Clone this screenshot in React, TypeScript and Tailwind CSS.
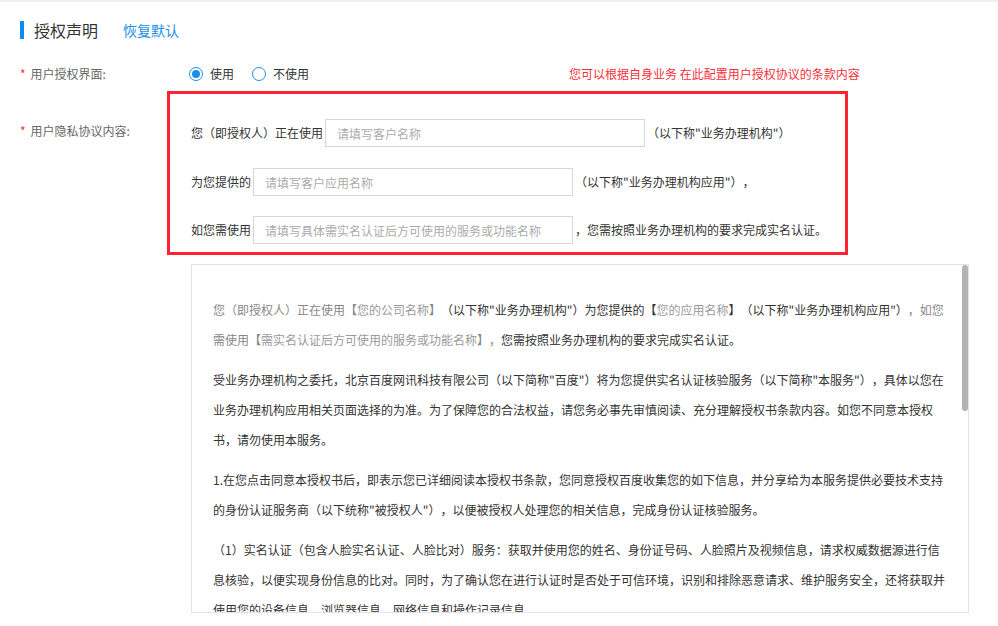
import React from "react";

const FONT = { fontFamily: '"Noto Sans CJK SC", "Noto Sans", sans-serif' };

function Radio({ checked, label }: { checked: boolean; label: string }) {
  return (
    <label className="flex items-center">
      <span className="flex h-[14px] w-[14px] items-center justify-center rounded-full border border-[#1a8fe6] bg-white">
        {checked && <span className="h-[8px] w-[8px] rounded-full bg-[#1a8fe6]" />}
      </span>
      <span className="ml-[7px] text-[12px] leading-[20px] text-[#333]">{label}</span>
    </label>
  );
}

function Field({ placeholder }: { placeholder: string }) {
  return (
    <input
      readOnly
      placeholder={placeholder}
      className="mx-[2px] h-[28px] w-[320px] border border-[#d6d6d6] bg-white px-[11px] text-[12px] text-[#333] outline-none placeholder:text-[#ababab]"
      style={FONT}
    />
  );
}

export default function App() {
  const g = "text-[#888]";
  const l = "text-[#9a9a9a]";
  return (
    <div className="h-[626px] w-[998px] overflow-hidden bg-white text-[#333] [text-spacing-trim:space-all]" style={FONT}>
      <div className="h-[2px] bg-[#eef0f5]" />

      {/* header */}
      <div className="mt-[19px] flex h-[18px] items-center pl-5">
        <div className="h-[18px] w-[4px] bg-[#0f8cec]" />
        <div className="ml-[10px] text-[16px] leading-[18px] text-[#333]">授权声明</div>
        <div className="ml-[25px] text-[14px] leading-[18px] text-[#1a8fe6]">恢复默认</div>
      </div>

      {/* row 1 */}
      <div className="mt-[25px] flex h-[20px] items-center">
        <div className="w-[189px] pl-5 text-[12px] leading-[20px] text-[#666]">
          <span className="mr-[5px] text-[#f5303a]">*</span>用户授权界面:
        </div>
        <div className="flex w-[380px] items-center gap-[18px]">
          <Radio checked label="使用" />
          <Radio checked={false} label="不使用" />
        </div>
        <div className="text-[12px] leading-[20px] text-[#f5303a]">您可以根据自身业务 在此配置用户授权协议的条款内容</div>
      </div>

      {/* row 2 */}
      <div className="mt-[7px] flex">
        <div className="w-[167px] pl-5 pt-[30px] text-[12px] leading-[20px] text-[#666]">
          <span className="mr-[5px] text-[#f5303a]">*</span>用户隐私协议内容:
        </div>
        <div className="w-[681px] border-[3px] border-[#ff2233] pb-[8px] pl-[21px] pt-[25px] text-[12px] text-[#333]">
          <div className="flex h-[28px] items-center">
            <span>您（即授权人）正在使用</span>
            <Field placeholder="请填写客户名称" />
            <span>（以下称"业务办理机构"）</span>
          </div>
          <div className="mt-[21px] flex h-[28px] items-center">
            <span>为您提供的</span>
            <Field placeholder="请填写客户应用名称" />
            <span>（以下称"业务办理机构应用"），</span>
          </div>
          <div className="mt-[20px] flex h-[28px] items-center">
            <span>如您需使用</span>
            <Field placeholder="请填写具体需实名认证后方可使用的服务或功能名称" />
            <span>，您需按照业务办理机构的要求完成实名认证。</span>
          </div>
        </div>
      </div>

      {/* agreement text box */}
      <div className="relative ml-[191px] mt-[9px] h-[349px] w-[778px] overflow-hidden border border-[#e3e3e3]">
        <div className="w-[757px] pl-[21px] pt-[30px] text-[12px] leading-[30px] text-[#333]">
          <p className="mb-[10px] whitespace-nowrap">
            <span className={g}>您（即授权人）正在使用【</span>
            <span className={l}>您的公司名称</span>
            <span className={g}>】</span>
            （以下称"业务办理机构"）为您提供的【<span className={l}>您的应用名称</span>】（以下称"业务办理机构应用"）<span className={g}>，如您</span>
            <br />
            <span className={g}>需使用【</span>
            <span className={l}>需实名认证后方可使用的服务或功能名称</span>
            <span className={g}>】，</span>
            您需按照业务办理机构的要求完成实名认证。
          </p>
          <p className="mb-[10px] whitespace-nowrap">
            受业务办理机构之委托，北京百度网讯科技有限公司（以下简称"百度"）将为您提供实名认证核验服务（以下简称"本服务"），具体以您在
            <br />
            业务办理机构应用相关页面选择的为准。为了保障您的合法权益，请您务必事先审慎阅读、充分理解授权书条款内容。如您不同意本授权
            <br />
            书，请勿使用本服务。
          </p>
          <p className="mb-[10px] whitespace-nowrap">
            1.在您点击同意本授权书后，即表示您已详细阅读本授权书条款，您同意授权百度收集您的如下信息，并分享给为本服务提供必要技术支持
            <br />
            的身份认证服务商（以下统称"被授权人"），以便被授权人处理您的相关信息，完成身份认证核验服务。
          </p>
          <p className="mb-[10px] whitespace-nowrap">
            （1）实名认证（包含人脸实名认证、人脸比对）服务：获取并使用您的姓名、身份证号码、人脸照片及视频信息，请求权威数据源进行信
            <br />
            息核验，以便实现身份信息的比对。同时，为了确认您在进行认证时是否处于可信环境，识别和排除恶意请求、维护服务安全，还将获取并
            <br />
            使用您的设备信息、浏览器信息、网络信息和操作记录信息。
          </p>
        </div>
        <div className="absolute right-0 top-0 h-[146px] w-[6px] rounded-[3px] bg-[#b3b3b3]" />
      </div>
    </div>
  );
}
